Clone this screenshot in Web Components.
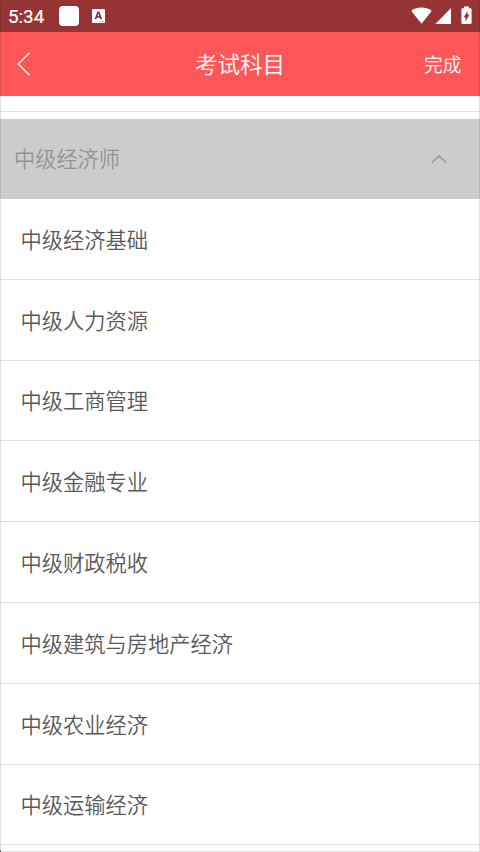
<!DOCTYPE html>
<html lang="zh-CN">
<head>
<meta charset="utf-8">
<title>考试科目</title>
<style>
html,body{margin:0;height:852px;overflow:hidden;background:#fff}
body{font-family:"Noto Sans CJK SC",sans-serif;font-weight:350;position:relative}
body::after{content:"";position:absolute;inset:0;border:1px solid rgba(0,0,0,.1);border-top-color:transparent;background:linear-gradient(#777,#777) 0 100%/1px 2px no-repeat border-box;pointer-events:none}
</style>
</head>
<body>
<exam-screen>
  <status-bar time="5:34"></status-bar>
  <title-bar><span slot="title">考试科目</span><span slot="action">完成</span></title-bar>
  <subject-group>
    <span slot="name">中级经济师</span>
    <subject-row>中级经济基础</subject-row>
    <subject-row>中级人力资源</subject-row>
    <subject-row>中级工商管理</subject-row>
    <subject-row>中级金融专业</subject-row>
    <subject-row>中级财政税收</subject-row>
    <subject-row>中级建筑与房地产经济</subject-row>
    <subject-row>中级农业经济</subject-row>
    <subject-row>中级运输经济</subject-row>
  </subject-group>
</exam-screen>
<script>
function element(name, render) {
  customElements.define(name, class extends HTMLElement {
    constructor() {
      super();
      this.attachShadow({mode: 'open'}).innerHTML = render(this);
    }
  });
}

element('exam-screen', () => `
<style>:host{display:flex;flex-direction:column;height:852px;overflow:hidden;background:#fff}</style>
<slot></slot>`);

element('status-bar', el => `
<style>
:host{display:flex;align-items:center;height:32px;flex:none;background:#963334;color:#fff;box-sizing:border-box;padding:0 7px 0 8px}
.time{font:400 18.8px/32px Roboto,sans-serif;-webkit-text-stroke:.2px #fff;width:51px;padding-top:1px;box-sizing:border-box;height:32px}
.app{width:20px;height:20px;border-radius:4px;background:#fff;margin-right:13px}
.spacer{flex:1}
svg{display:block;flex:none}
</style>
<span class="time">${el.getAttribute('time')}</span>
<span class="app"></span>
<svg width="13" height="14" viewBox="0 0 13 14"><rect width="13" height="14" rx="1" fill="#fff"/><path d="M3.400 10.200 6 3.200h.8L9.400 10.200M4.400 8h4" fill="none" stroke="#7d2b2d" stroke-width="1.600"/><path d="M7 12.500h5" stroke="#c99" stroke-width=".8"/></svg>
<span class="spacer"></span>
<svg width="62" height="20" viewBox="411 6 62 20" fill="#fff">
<path d="M411.300 10.900C416.800 6.500 426.200 6.500 431.700 10.900L421.500 23.800Z"/>
<path d="M451 8v16h-15.600Z"/>
<path d="M464 8.200V6.600h5v1.600h1.300q1.300 0 1.300 1.300v13.200q0 1.300-1.300 1.300h-7.600q-1.300 0-1.300-1.300V9.500q0-1.300 1.300-1.300Z"/>
<path d="M467.600 11.100v3.700h1.900l-4 6.600v-4.200h-1.900Z" fill="#963334"/>
</svg>`);

element('title-bar', () => `
<style>
:host{display:grid;grid-template-columns:1fr auto 1fr;align-items:center;height:64px;flex:none;background:#ff5757;color:#fff;padding:0 18px 0 18px;box-sizing:border-box}
.title{font-size:22.500px;line-height:32px;padding-bottom:2px}
.action{font-size:18.800px;line-height:32px;justify-self:end;padding-right:.5px}
svg{display:block;margin-left:-1px}
</style>
<svg width="14" height="24" viewBox="0 0 14 24"><path d="M12.500.800 1.200 12l11.300 11.200" fill="none" stroke="#fff" stroke-width="1.300"/></svg>
<span class="title"><slot name="title"></slot></span>
<span class="action"><slot name="action"></slot></span>`);

element('subject-group', () => `
<style>
:host{display:block}
.edge{height:15px;border-bottom:1px solid #dedede;margin-bottom:7px}
.head{display:flex;align-items:center;justify-content:space-between;height:80px;background:#ccc;color:#949494;padding:0 33px 0 14px;box-sizing:border-box;font-size:21.200px;line-height:30px}
.name{padding-bottom:1.600px}
svg{display:block}
</style>
<div class="edge"></div>
<div class="head"><span class="name"><slot name="name"></slot></span><svg width="16" height="10" viewBox="0 0 16 10"><path d="M1.200 8.500 8 1.900l6.800 6.600" fill="none" stroke="#999" stroke-width="1.700"/></svg></div>
<slot></slot>`);

element('subject-row', () => `
<style>
:host{display:flex;align-items:center;height:80.800px;box-sizing:border-box;border-bottom:1px solid #dedede;padding:0 0 .200px 20.500px;color:#595959;font-size:21.250px;line-height:32px}
</style>
<slot></slot>`);
</script>
</body>
</html>
